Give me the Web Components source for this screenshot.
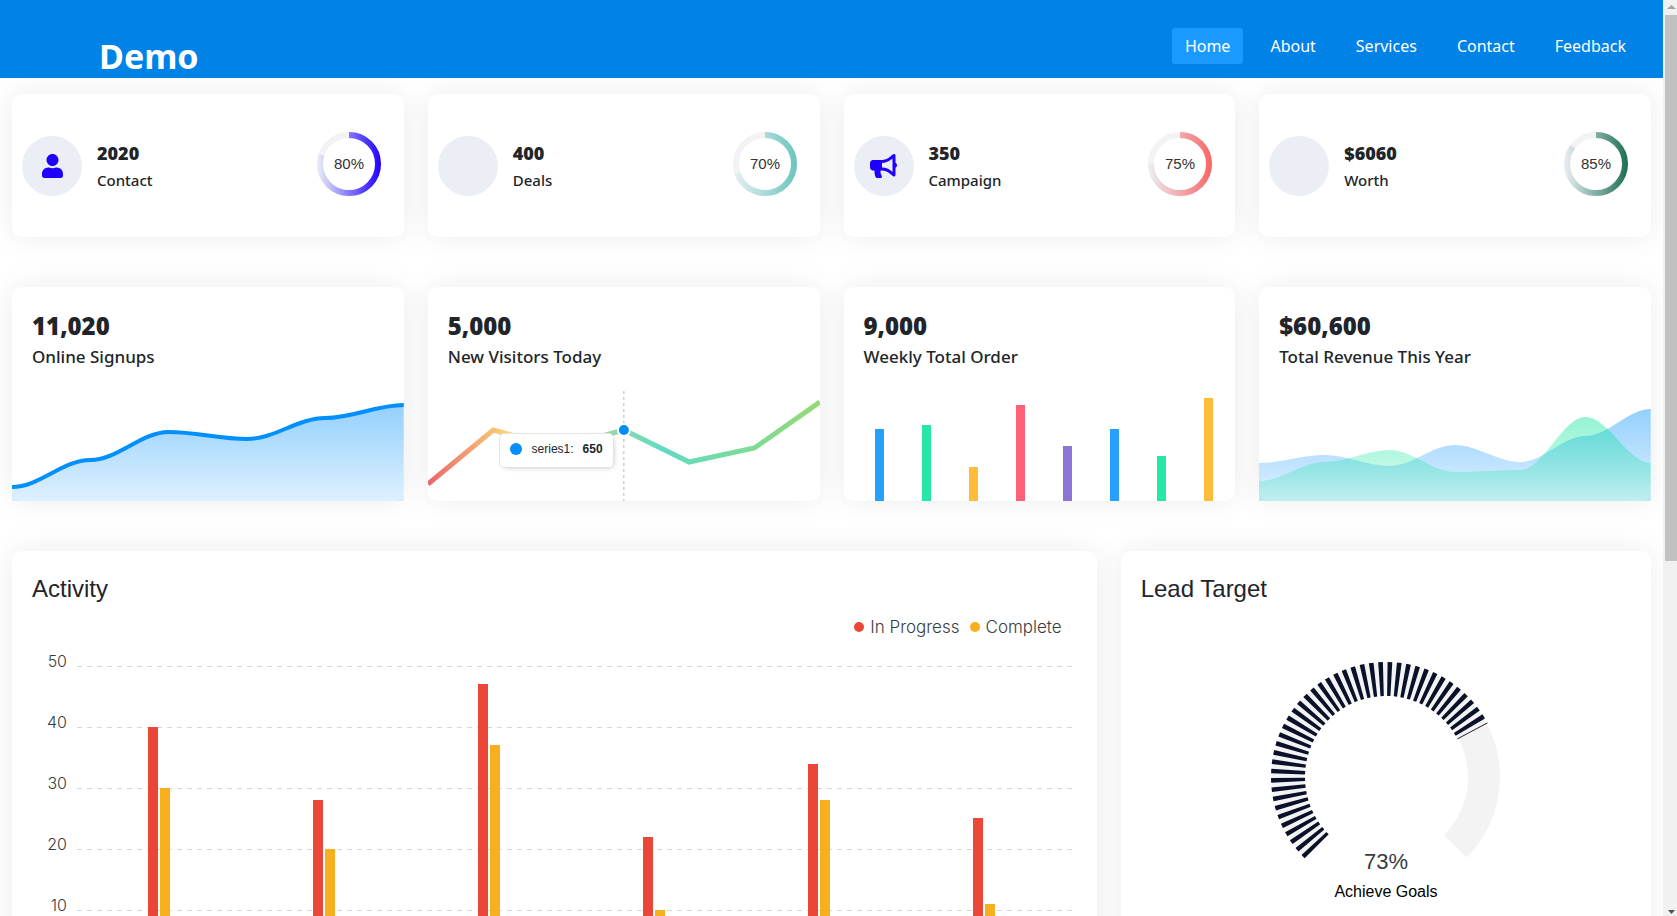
<!DOCTYPE html>
<html lang="en">
<head>
<meta charset="utf-8">
<title>Demo</title>
<style>
  html, body { margin: 0; height: 100%; }
  body { background: #fff; color: #212529; font-family: "Noto Sans", "Open Sans", sans-serif; overflow: hidden; }
</style>
</head>
<body>
<app-shell>
  <app-header slot="header">Demo
    <nav-link slot="nav" href="#home" active>Home</nav-link>
    <nav-link slot="nav" href="#about">About</nav-link>
    <nav-link slot="nav" href="#services">Services</nav-link>
    <nav-link slot="nav" href="#contact">Contact</nav-link>
    <nav-link slot="nav" href="#feedback">Feedback</nav-link>
  </app-header>

  <card-row>
    <stat-card value="2020" label="Contact" icon="user" percent="80" color="#1f00ff"></stat-card>
    <stat-card value="400" label="Deals" percent="70" color="#67c6bb"></stat-card>
    <stat-card value="350" label="Campaign" icon="bullhorn" percent="75" color="#f96464"></stat-card>
    <stat-card value="$6060" label="Worth" percent="85" color="#1a6e53"></stat-card>
  </card-row>

  <card-row>
    <metric-card value="11,020" label="Online Signups">
      <area-chart line series='[{"color":"#008ffb","points":[96,69,41,48,27,14]}]'></area-chart>
    </metric-card>
    <metric-card value="5,000" label="New Visitors Today">
      <line-chart points="[93,39,57,39,71,57,11]" active="3" name="series1" reading="650"></line-chart>
    </metric-card>
    <metric-card value="9,000" label="Weekly Total Order">
      <bar-chart values="[72,76,34,96,55,72,45,103]"></bar-chart>
    </metric-card>
    <metric-card value="$60,600" label="Total Revenue This Year">
      <area-chart series='[{"color":"#008ffb","points":[72,64,75,54,71,45,18]},{"color":"#00e396","points":[90,71,59,81,79,26,72]}]'></area-chart>
    </metric-card>
  </card-row>

  <card-row>
    <panel-card heading="Activity" wide><activity-chart></activity-chart></panel-card>
    <panel-card heading="Lead Target" narrow><goal-gauge percent="73" label="Achieve Goals"></goal-gauge></panel-card>
  </card-row>
</app-shell>

<script>
const cardStyle = `background:#fff; border-radius:10px; box-shadow:0 0 30px rgba(0,0,0,.08); box-sizing:border-box;`;

class Base extends HTMLElement {
  connectedCallback() {
    if (this.shadowRoot) return;
    this.attachShadow({ mode: "open" }).innerHTML = this.render();
  }
  attr(name) { return this.getAttribute(name) || ""; }
}

customElements.define("app-shell", class extends Base {
  render() {
    return `<style>
      :host { display:flex; height:100vh; }
      .page { flex:1; min-width:0; overflow:hidden; }
      main { display:flex; flex-direction:column; gap:50px; padding:16px 12px 50px; }
    </style>
    <div class="page"><slot name="header"></slot><main><slot></slot></main></div>
    <page-scrollbar></page-scrollbar>`;
  }
});

customElements.define("page-scrollbar", class extends Base {
  render() {
    return `<style>
      :host { display:flex; flex-direction:column; width:14px; background:#f1f1f1; }
      svg { display:block; width:14px; height:15px; flex:none; }
      .track { flex:1; padding-left:2px; }
      .thumb { height:61.6%; background:#c1c1c1; }
    </style>
    <svg viewBox="0 0 14 15"><path d="M4 9h9L8.500 5z" fill="#a3a3a3"/></svg>
    <div class="track"><div class="thumb"></div></div>
    <svg viewBox="0 0 14 15"><path d="M5 9h7L8.500 13z" fill="#505050"/></svg>`;
  }
});

customElements.define("app-header", class extends Base {
  render() {
    return `<style>
      :host { display:block; }
      header { display:flex; justify-content:space-between; align-items:flex-end; height:78px; box-sizing:border-box; background:#0082e6; padding:0 24px 0 99px; }
      h1 { margin:0; color:#fff; font-size:34px; line-height:44px; font-weight:700; }
      nav { align-self:flex-start; display:flex; gap:14px; padding-top:28px; }
    </style>
    <header><h1><slot></slot></h1><nav><slot name="nav"></slot></nav></header>`;
  }
});

customElements.define("nav-link", class extends Base {
  render() {
    return `<style>
      :host { display:block; }
      a { display:block; padding:0 13px; border-radius:3px; color:#fff; font-size:16px; line-height:36px; text-decoration:none; }
      :host([active]) a { background:#1b9bff; }
    </style>
    <a href="${this.attr("href")}"><slot></slot></a>`;
  }
});

customElements.define("card-row", class extends Base {
  render() {
    return `<style>
      :host { display:grid; grid-template-columns:repeat(12, minmax(0, 1fr)); gap:24px; }
      ::slotted(*) { grid-column:span 3; }
      ::slotted([wide]) { grid-column:span 8; }
      ::slotted([narrow]) { grid-column:span 4; }
    </style><slot></slot>`;
  }
});

const icons = {
  user: `<svg viewBox="0 0 448 512" aria-hidden="true"><path d="M224 256c70.7 0 128-57.3 128-128S294.700 0 224 0 96 57.300 96 128s57.300 128 128 128zm89.600 32h-16.700c-22.200 10.200-46.900 16-72.900 16s-50.600-5.800-72.900-16h-16.700C60.200 288 0 348.200 0 422.400V464c0 26.500 21.500 48 48 48h352c26.500 0 48-21.500 48-48v-41.600c0-74.200-60.200-134.400-134.400-134.400z"/></svg>`,
  bullhorn: `<svg viewBox="0 0 576 512" aria-hidden="true"><path d="M576 240c0-23.630-12.950-44.040-32-55.120V32.010C544 23.260 537.020 0 512 0c-7.120 0-14.190 2.380-19.980 7.020l-85.030 68.030C364.280 109.190 310.660 128 256 128H64c-35.350 0-64 28.650-64 64v96c0 35.350 28.650 64 64 64h33.700c-1.390 10.480-2.180 21.140-2.180 32 0 39.770 9.260 77.350 25.560 110.940 5.190 10.690 16.520 17.060 28.400 17.060h74.280c26.050 0 41.690-29.840 25.900-50.560-16.400-21.520-26.150-48.360-26.150-77.440 0-11.110 1.620-21.790 4.410-32H256c54.660 0 108.280 18.810 150.980 52.950l85.030 68.030a32.023 32.023 0 0 0 19.980 7.020c24.920 0 32-22.780 32-32V295.130C563.050 284.040 576 263.630 576 240zm-96 141.420l-33.050-26.440C392.950 311.780 325.120 288 256 288v-96c69.120 0 136.950-23.780 190.950-66.980L480 98.580v282.840z"/></svg>`
};

customElements.define("stat-card", class extends Base {
  render() {
    const pct = Number(this.attr("percent"));
    const r = 29, len = 2 * Math.PI * r;
    return `<style>
      :host { display:flex; align-items:center; height:143px; padding:0 23px 0 10px; ${cardStyle} }
      .icon { flex:none; display:grid; place-items:center; width:60px; height:60px; border-radius:50%; background:#ebeff5; }
      .icon svg { display:block; height:24px; fill:#1f00ff; }
      .text { flex:1; display:flex; flex-direction:column; gap:7px; padding-left:15px; }
      h2 { margin:0; font-size:18px; line-height:22px; font-weight:900; }
      p { margin:0; font-size:15px; line-height:18px; font-weight:500; }
      .ring { display:block; width:64px; height:64px; padding-bottom:4px; }
      text { font:15px "Liberation Sans", sans-serif; fill:#333; text-anchor:middle; }
    </style>
    <div class="icon">${icons[this.attr("icon")] || ""}</div>
    <div class="text"><h2>${this.attr("value")}</h2><p>${this.attr("label")}</p></div>
    <svg class="ring" viewBox="0 0 64 64" role="img" aria-label="${pct}%">
      <defs><linearGradient id="g" gradientUnits="userSpaceOnUse" x1="0" y1="0" x2="0" y2="64">
        <stop offset="0" stop-color="#ebeff5"/><stop offset="1" stop-color="${this.attr("color")}"/></linearGradient></defs>
      <circle cx="32" cy="32" r="${r}" fill="none" stroke="#f3f3f3" stroke-width="6"/>
      <circle cx="32" cy="32" r="${r}" fill="none" stroke="url(#g)" stroke-width="6" stroke-dasharray="${len * pct / 100} ${len}" transform="rotate(-90 32 32)"/>
      <text x="32" y="37">${pct}%</text>
    </svg>`;
  }
});

customElements.define("metric-card", class extends Base {
  render() {
    return `<style>
      :host { display:flex; flex-direction:column; justify-content:space-between; height:214px; ${cardStyle} }
      .text { display:flex; flex-direction:column; gap:6px; padding:24px 20px 0; }
      h2 { margin:0; font-size:24px; line-height:29px; font-weight:900; }
      p { margin:0; font-size:17px; line-height:22px; font-weight:500; }
    </style>
    <div class="text"><h2>${this.attr("value")}</h2><p>${this.attr("label")}</p></div>
    <slot></slot>`;
  }
});

const sparkStyle = `:host { display:block; position:relative; height:110px; } svg.plot { display:block; width:100%; height:110px; }`;

/* Flat-tangent curve: control points lie 35% of a step from each point. */
function smooth(points) {
  const step = 392 / (points.length - 1), c = step * 0.35;
  return points.map((y, i) => {
    const x = i * step;
    return i ? `C${x - step + c} ${points[i - 1]} ${x - c} ${y} ${x} ${y}` : `M0 ${y}`;
  }).join("");
}

customElements.define("area-chart", class extends Base {
  render() {
    const series = JSON.parse(this.attr("series"));
    return `<style>${sparkStyle}</style>
    <svg class="plot" viewBox="0 0 392 110" preserveAspectRatio="none" aria-hidden="true">
      ${series.map((s, i) => `
      <linearGradient id="f${i}" x1="0" y1="0" x2="0" y2="1"><stop offset="0" stop-color="${s.color}" stop-opacity=".42"/><stop offset="1" stop-color="${s.color}" stop-opacity=".13"/></linearGradient>
      <path d="${smooth(s.points)}V110H0z" fill="url(#f${i})"/>
      ${this.hasAttribute("line") ? `<path d="${smooth(s.points)}" fill="none" stroke="${s.color}" stroke-width="4" vector-effect="non-scaling-stroke"/>` : ""}`).join("")}
    </svg>`;
  }
});

customElements.define("line-chart", class extends Base {
  render() {
    const pts = JSON.parse(this.attr("points"));
    const step = 392 / (pts.length - 1), a = Number(this.attr("active"));
    const x = a * step, y = pts[a];
    return `<style>${sparkStyle}
      .tip { position:absolute; right:calc(50% + 10px); bottom:33px; display:flex; align-items:center; height:35px; box-sizing:border-box; padding:0 10px; white-space:nowrap;
        background:rgba(255,255,255,.96); border:1px solid #e3e3e3; border-radius:5px; box-shadow:2px 2px 6px -4px #999; font:12px "Liberation Sans", sans-serif; }
      .dot { width:12px; height:12px; border-radius:50%; background:#008ffb; margin-right:10px; }
      b { margin-left:9px; }
      .tip > * { position:relative; bottom:2px; }
    </style>
    <svg class="plot" viewBox="0 0 392 110" preserveAspectRatio="none" aria-hidden="true">
      <linearGradient id="s" gradientUnits="userSpaceOnUse" x1="0" y1="0" x2="392" y2="0">
        <stop offset="0" stop-color="#eb656f"/><stop offset=".2" stop-color="#fad375"/><stop offset=".6" stop-color="#61dbc3"/><stop offset="1" stop-color="#95da74"/></linearGradient>
      <path d="M${x} 0V110" stroke="#b6b6b6" stroke-dasharray="3" vector-effect="non-scaling-stroke"/>
      <polyline points="${pts.map((p, i) => `${i * step},${p}`).join(" ")}" fill="none" stroke="url(#s)" stroke-width="5" vector-effect="non-scaling-stroke"/>
      <circle cx="${x}" cy="${y}" r="6" fill="#008ffb" stroke="#fff" stroke-width="2"/>
    </svg>
    <div class="tip"><span class="dot"></span><span>${this.attr("name")}:</span><b>${this.attr("reading")}</b></div>`;
  }
});

customElements.define("bar-chart", class extends Base {
  render() {
    const colors = ["#26a0fc", "#26e7a6", "#febc3b", "#ff6178", "#8b75d7"];
    return `<style>${sparkStyle}
      .bars { display:flex; justify-content:space-between; align-items:flex-end; height:110px; padding:0 22px 0 31px; }
      i { display:block; width:9px; }
    </style>
    <div class="bars" aria-hidden="true">${JSON.parse(this.attr("values")).map((v, i) =>
      `<i style="height:${v}px;background:${colors[i % 5]}"></i>`).join("")}</div>`;
  }
});

customElements.define("panel-card", class extends Base {
  render() {
    return `<style>
      :host { display:block; padding:23px 20px; ${cardStyle} }
      h2 { margin:0; font:24px/29px "Liberation Sans", sans-serif; }
    </style><h2>${this.attr("heading")}</h2><slot></slot>`;
  }
});

customElements.define("activity-chart", class extends Base {
  render() {
    const data = [[40, 30], [28, 20], [47, 37], [22, 10], [34, 28], [25, 11]];
    const px = v => Math.round(v * 61 / 10);
    return `<style>
      :host { display:block; padding:12px 10px 0 0; color:#373d3f; font:17px/24px Inter, "Open Sans", sans-serif; font-weight:300; }
      ul { display:flex; justify-content:flex-end; gap:10px; margin:0; padding:0 5px 0 0; list-style:none; }
      li { display:flex; align-items:center; gap:6px; }
      li::before { content:""; width:10px; height:10px; border-radius:50%; background:var(--c); }
      .chart { display:grid; grid-template-columns:35px 1fr; column-gap:10px; padding-top:14px; }
      .axis { text-align:right; line-height:16px; font-size:16px; }
      .axis div { height:61px; }
      .lines, .bars { grid-column:2; grid-row:1; margin-top:13px; }
      .lines { margin-right:-5px; }
      .lines div { height:61px; background:repeating-linear-gradient(90deg, #cfd8e2 0 5px, transparent 5px 10px) top / 100% 1px no-repeat; }
      .bars { display:flex; height:305px; }
      .group { flex:1; display:flex; justify-content:center; align-items:flex-end; gap:2px; }
      .group i { display:block; width:10px; background:#ea4738; }
      .group i + i { background:#f7af1e; }
    </style>
    <ul><li style="--c:#ea4738">In Progress</li><li style="--c:#f7af1e">Complete</li></ul>
    <div class="chart">
      <div class="axis">${[50, 40, 30, 20, 10].map(n => `<div>${n}</div>`).join("")}</div>
      <div class="lines">${"<div></div>".repeat(5)}</div>
      <div class="bars">${data.map(([a, b]) => `<div class="group"><i style="height:${px(a)}px"></i><i style="height:${px(b)}px"></i></div>`).join("")}</div>
    </div>`;
  }
});

customElements.define("goal-gauge", class extends Base {
  render() {
    const pct = Number(this.attr("percent")), r = 98, c = 120;
    const at = deg => { const t = deg * Math.PI / 180; return `${c + r * Math.sin(t)} ${c + r * Math.cos(t) * -1}`; };
    const end = -135 + 270 * pct / 100;
    return `<style>
      :host { display:block; padding-top:54px; }
      svg { display:block; width:240px; height:250px; margin:0 auto; }
      text { font-family:"Liberation Sans", sans-serif; text-anchor:middle; }
      .value { font-size:22px; fill:#373d3f; }
      .label { font-size:16px; fill:#000; }
    </style>
    <svg viewBox="0 0 240 250" role="img" aria-label="${this.attr("label")} ${pct}%">
      <path d="M${at(-135)}A${r} ${r} 0 1 1 ${at(135)}" fill="none" stroke="#f3f3f3" stroke-width="32"/>
      <path d="M${at(-135)}A${r} ${r} 0 1 1 ${at(end)}" fill="none" stroke="#0a1128" stroke-width="34" stroke-dasharray="4"/>
      <text class="value" x="120" y="212">${pct}%</text>
      <text class="label" x="120" y="240">${this.attr("label")}</text>
    </svg>`;
  }
});
</script>
</body>
</html>
